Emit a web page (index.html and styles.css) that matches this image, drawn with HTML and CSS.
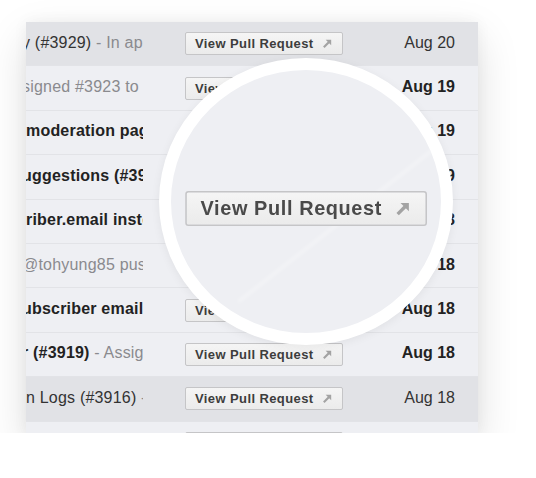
FILE: index.html
```html
<!DOCTYPE html>
<html>
<head>
  <title>Pull Request Notifications</title>
  <link rel="stylesheet" href="styles.css">
</head>
<body>
  <div class="inbox">
    <div class="row read">
      <div class="subject"><span class="cut">y</span> (#3929)<span class="snippet"> - In app notifications</span></div>
      <a class="pr-button">View Pull Request <svg viewBox="0 0 12 12"><path d="M2 10L8.5 3.5" /><polygon points="4,2 10,2 10,8" /></svg></a>
      <div class="date">Aug 20</div>
    </div>
    <div class="row">
      <div class="subject snippet"><span class="cut">s</span>igned #3923 to you</div>
      <a class="pr-button">View Pull Request <svg viewBox="0 0 12 12"><path d="M2 10L8.5 3.5" /><polygon points="4,2 10,2 10,8" /></svg></a>
      <div class="date">Aug 19</div>
    </div>
    <div class="row">
      <div class="subject">moderation page</div>
      <a class="pr-button">View Pull Request <svg viewBox="0 0 12 12"><path d="M2 10L8.5 3.5" /><polygon points="4,2 10,2 10,8" /></svg></a>
      <div class="date">Aug 19</div>
    </div>
    <div class="row">
      <div class="subject"><span class="cut">u</span>ggestions (#3921)</div>
      <a class="pr-button">View Pull Request <svg viewBox="0 0 12 12"><path d="M2 10L8.5 3.5" /><polygon points="4,2 10,2 10,8" /></svg></a>
      <div class="date">Aug 19</div>
    </div>
    <div class="row">
      <div class="subject">riber.email instead</div>
      <a class="pr-button">View Pull Request <svg viewBox="0 0 12 12"><path d="M2 10L8.5 3.5" /><polygon points="4,2 10,2 10,8" /></svg></a>
      <div class="date">Aug 18</div>
    </div>
    <div class="row">
      <div class="subject snippet"><span class="cut">@</span>tohyung85 pushed</div>
      <a class="pr-button">View Pull Request <svg viewBox="0 0 12 12"><path d="M2 10L8.5 3.5" /><polygon points="4,2 10,2 10,8" /></svg></a>
      <div class="date">Aug 18</div>
    </div>
    <div class="row">
      <div class="subject"><span class="cut">u</span>bscriber emails</div>
      <a class="pr-button">View Pull Request <svg viewBox="0 0 12 12"><path d="M2 10L8.5 3.5" /><polygon points="4,2 10,2 10,8" /></svg></a>
      <div class="date">Aug 18</div>
    </div>
    <div class="row">
      <div class="subject"><span class="cut">r</span> (#3919)<span class="snippet"> - Assigned</span></div>
      <a class="pr-button">View Pull Request <svg viewBox="0 0 12 12"><path d="M2 10L8.5 3.5" /><polygon points="4,2 10,2 10,8" /></svg></a>
      <div class="date">Aug 18</div>
    </div>
    <div class="row read">
      <div class="subject">n Logs (#3916)<span class="snippet"> - Merged</span></div>
      <a class="pr-button">View Pull Request <svg viewBox="0 0 12 12"><path d="M2 10L8.5 3.5" /><polygon points="4,2 10,2 10,8" /></svg></a>
      <div class="date">Aug 18</div>
    </div>
    <div class="row">
      <div class="subject">Update readme</div>
      <a class="pr-button">View Pull Request <svg viewBox="0 0 12 12"><path d="M2 10L8.5 3.5" /><polygon points="4,2 10,2 10,8" /></svg></a>
      <div class="date">Aug 17</div>
    </div>
  </div>

  <!-- zoomed in view over the list -->
  <div class="magnifier">
    <div class="glare"></div>
    <a class="pr-button big">View Pull Request <svg viewBox="0 0 12 12"><path d="M2 10L8.5 3.5" /><polygon points="4,2 10,2 10,8" /></svg></a>
  </div>
</body>
</html>
```

FILE: styles.css
```css
body {
  margin: 0;
  background: #ffffff;
  font-family: "Liberation Sans", Arial, sans-serif;
}

.inbox {
  width: 452px;
  height: 411px;
  margin: 22px 0 0 26px;
  overflow: hidden;
  background: #eeeff3;
  box-shadow: 0 16px 40px rgba(0, 0, 0, 0.13), 0 0 14px rgba(0, 0, 0, 0.05);
}

.row {
  display: flex;
  align-items: center;
  height: 44.4px;
  box-sizing: border-box;
  padding-right: 23px;
  border-bottom: 1px solid #e2e3e7;
  font-size: 16px;
  font-weight: bold;
  color: #222;
}

.row.read {
  background: #e1e2e6;
  font-weight: normal;
  color: #333;
}

.subject {
  width: 117px;
  flex-shrink: 0;
  margin-right: 42px;
  overflow: hidden;
  white-space: nowrap;
  margin-top: -2px;
  letter-spacing: 0.2px;
}

.cut {
  margin-left: -4px;
}

.snippet {
  font-weight: normal;
  color: #8a8a8e;
}

.pr-button {
  display: inline-flex;
  align-items: center;
  gap: 8px;
  height: 23px;
  box-sizing: border-box;
  padding: 0 9px 0 9px;
  border: 1px solid #c5c5c7;
  border-radius: 2px;
  background: linear-gradient(#f5f5f5, #ebebeb);
  font-size: 13px;
  font-weight: bold;
  letter-spacing: 0.4px;
  color: #3d3d3d;
  white-space: nowrap;
}

.pr-button svg {
  width: 11px;
  height: 11px;
}

.pr-button svg path {
  stroke: #a3a3a3;
  stroke-width: 2.4;
  fill: none;
}

.pr-button svg polygon {
  fill: #a3a3a3;
}

.date {
  flex: 1;
  text-align: right;
  margin-top: -2px;
}

.magnifier {
  position: absolute;
  left: 159px;
  top: 58px;
  width: 294px;
  height: 287px;
  box-sizing: border-box;
  border: 12px solid #ffffff;
  border-radius: 50%;
  background: #eeeff3;
  box-shadow: 0 2px 10px rgba(0, 0, 0, 0.06);
  display: flex;
  align-items: center;
  justify-content: center;
  padding-top: 14px;
  overflow: hidden;
}

.glare {
  position: absolute;
  left: 40px;
  top: 150px;
  width: 260px;
  height: 3px;
  background: rgba(255, 255, 255, 0.3);
  transform: rotate(-38deg);
  filter: blur(1.5px);
}

.pr-button.big {
  transform: scale(1.53);
  color: #4a4a4a;
  filter: blur(0.3px);
}
```
